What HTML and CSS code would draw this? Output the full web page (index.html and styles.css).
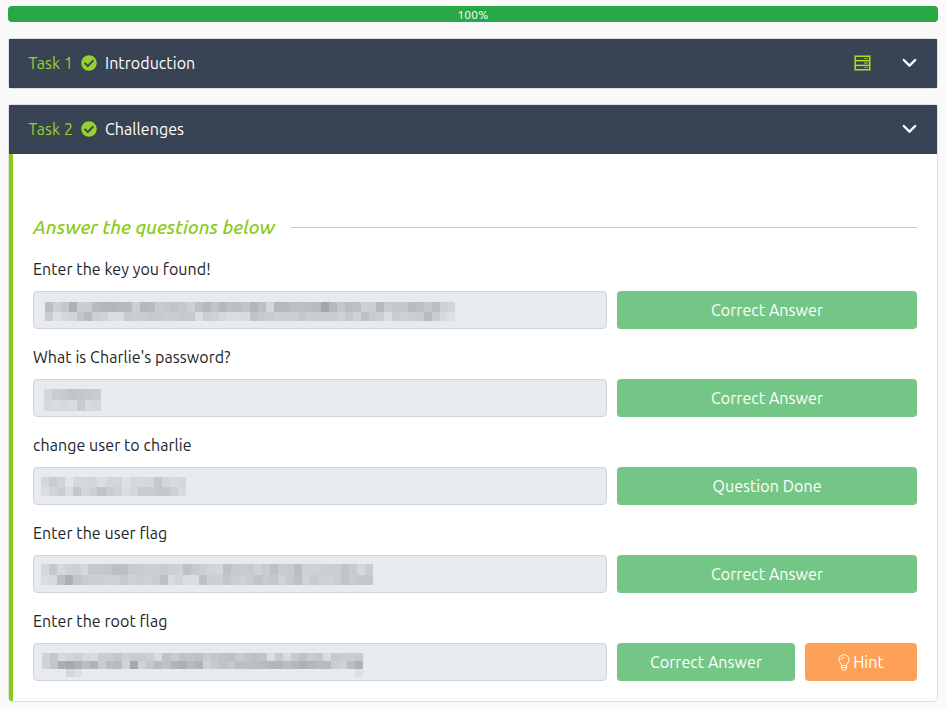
FILE: index.html
```html
<!DOCTYPE html>
<html lang="en">
<head>
<meta charset="utf-8">
<title>Tasks</title>
<link rel="stylesheet" href="styles.css">
</head>
<body>
<svg class="defs" width="0" height="0">
  <symbol id="check" viewBox="0 0 512 512"><path d="M504 256c0 136.967-111.033 248-248 248S8 392.967 8 256 119.033 8 256 8s248 111.033 248 248zM227.314 387.314l184-184c6.248-6.248 6.248-16.379 0-22.627l-22.627-22.627c-6.248-6.249-16.379-6.249-22.628 0L216 308.118l-70.059-70.059c-6.248-6.248-16.379-6.248-22.628 0l-22.627 22.627c-6.248 6.248-6.248 16.379 0 22.627l104 104c6.249 6.249 16.379 6.249 22.628.001z"/></symbol>
  <symbol id="chevron" viewBox="0 0 14 10"><path d="M1.3 2 7 7.7 12.7 2" fill="none" stroke="#fff" stroke-width="2.4" stroke-linecap="round" stroke-linejoin="round"/></symbol>
</svg>
<div class="progress">100%</div>

<section class="card">
  <header class="head">
    <span class="num">Task 1</span><svg class="check"><use href="#check"/></svg><span class="title">Introduction</span>
    <svg class="server" viewBox="0 0 17 16"><path d="M1 1h15v4.7H1zM1 5.7h15v4.6H1zM1 10.3h15V15H1z" fill="none" stroke="#6d9530" stroke-width="2"/><path d="M1.5 1.5h14v4h-14zM1.5 10.5h14v4h-14zM1.5 5.5v5M15.500 5.500v5" fill="none" stroke="#a8e01c"/><path d="M10 3.500h4M10 12.500h4M10 8h4" stroke="#7ba52c"/><path d="M10 7h4v2h-4z" fill="#6d9530"/></svg>
    <svg class="chevron"><use href="#chevron"/></svg>
  </header>
</section>

<section class="card open">
  <header class="head">
    <span class="num">Task 2</span><svg class="check"><use href="#check"/></svg><span class="title">Challenges</span>
    <svg class="chevron"><use href="#chevron"/></svg>
  </header>
  <div class="body">
    <h2 class="divider"><span>Answer the questions below</span></h2>
    <div class="question">
      <p class="label">Enter the key you found!</p>
      <div class="row"><div class="input"><div class="mosaic m1"></div></div><div class="btn"><span>Correct Answer</span></div></div>
    </div>
    <div class="question">
      <p class="label">What is Charlie's password?</p>
      <div class="row"><div class="input"><div class="mosaic m2"></div></div><div class="btn"><span>Correct Answer</span></div></div>
    </div>
    <div class="question">
      <p class="label">change user to charlie</p>
      <div class="row"><div class="input"><div class="mosaic m3"></div></div><div class="btn"><span>Question Done</span></div></div>
    </div>
    <div class="question">
      <p class="label">Enter the user flag</p>
      <div class="row"><div class="input"><div class="mosaic m4"></div></div><div class="btn"><span>Correct Answer</span></div></div>
    </div>
    <div class="question">
      <p class="label">Enter the root flag</p>
      <div class="row"><div class="input"><div class="mosaic m5"></div></div><div class="btn short"><span>Correct Answer</span></div><div class="btn hint"><svg class="bulb" viewBox="0 0 12 17"><path d="M3.500 11.500C3.500 9.500 1 8.500 1 5.700a5 5 0 0 1 10 0c0 2.800-2.500 3.800-2.500 5.800zM3.500 11.500v3l1 1.500h3l1-1.500v-3M3.500 13.500h5M3.500 5.700A2.500 2.500 0 0 1 6 3.200" fill="none" stroke="#fff" stroke-width="1"/></svg><span>Hint</span></div></div>
    </div>
  </div>
</section>
<script src="mosaic.js"></script>
</body>
</html>
```
FILE: styles.css
```css
* { box-sizing: border-box; }
body { margin: 0; padding: 6px 9px 0 8px; background: #fafafa; color: #212529; font: 16px/24px Ubuntu, "Noto Sans", sans-serif; letter-spacing: 0.06px; }
.defs { position: absolute; }
.progress { height: 16px; border-radius: 4px; background: #28a745; color: #fff; font-size: 12px; line-height: 17px; text-align: center; letter-spacing: 0.2px; }
.card { margin-top: 16px; background: #fff; border: 1px solid #dfdfdf; border-radius: 4px; }
.card + .card { margin-top: 15px; }
.head { height: 49px; display: flex; align-items: center; padding: 0 20px 2px 19.5px; background: #384354; color: #fff; }
.num { width: 44.5px; color: #98d02c; white-space: nowrap; }
.check { width: 16px; height: 16px; margin: 0 8px; fill: #98d02c; }
.title { margin-right: auto; }
.server { width: 17px; height: 16px; margin-right: 31px; }
.chevron { width: 15px; height: 10px; }
.body { height: 547px; padding: 61px 20px 20px; border-left: 4px solid #88cc14; border-bottom-left-radius: 3px; }
.divider { display: flex; align-items: center; gap: 16px; margin: 0 0 17px; color: #88cc14; font-size: 19.2px; font-style: italic; font-weight: 500; line-height: 25px; white-space: nowrap; letter-spacing: 0; }
.divider span { width: 242px; }
.divider::after { content: ""; flex: 1; height: 1px; background: #c8c8c8; }
.question { height: 88px; }
.label { margin: 0 0 10px; }
.row { display: flex; gap: 10px; }
.input { width: 574px; height: 38px; border: 1px solid #ced4da; border-radius: 4px; background: #e8ebee; }
.btn { width: 300px; height: 38px; display: flex; align-items: center; justify-content: center; border-radius: 4px; background: #74c686; color: #fff; }
.short { width: 178px; }
.hint { width: 112px; gap: 3px; background: #fea055; }
.bulb { width: 12px; height: 17px; }
.mosaic { display: flex; flex-direction: column; }
.strip { display: flex; }
.strip i { flex: 1; }
.m1 { width: 410px; margin: 10px 0 0 11px; }
.m2 { width: 57px; margin: 9px 0 0 10px; }
.m3 { width: 145px; margin: 9px 0 0 7px; }
.m4 { width: 332px; margin: 8px 0 0 7px; }
.m5 { width: 321px; margin: 9px 0 0 8px; }
```
FILE: mosaic.js
```js
// Each strip: [height in px, one hex brightness per cell; "--" leaves the cell clear]
const masks = {
  m1: [
    [10, "bb cd c5 ae ca ca b9 b4 b4 b7 b7 cd b6 b9 ca c6 c1 c6 cd bf b7 c1 b4 bd bb c2 b4 be d5 b5 b7 bc be bb b9 a4 b7 c5 ba be cd cd b7 c9 c5 c5 ba be c6 bc ce d2"],
    [9, "ca df d6 d2 c3 b9 cd d0 db db c8 ca cb c6 c7 cb cb c7 c6 db cc cf d6 da da d9 c1 c8 ca ce cd cd c5 cb c9 c9 c9 cf c6 cf bd c9 cd da ca ce cc c9 b9 ca d8 de"]
  ],
  m2: [
    [11, "d4 cb c7 c2 c4 c6 c9"],
    [11, "d6 d9 d5 d9 ca d8 d5"]
  ],
  m3: [
    [10, "d6 ca d2 e2 d5 d5 d3 db d4 d4 df d6 d7 d5 c5 d4 d9 d4"],
    [9, "dc d3 cc db c4 d4 ce c1 cb cf da d5 ca c9 c6 c6 cf d9"]
  ],
  m4: [
    [11, "d6 c6 d6 d0 cd d5 c6 c6 c5 bd be c8 ca cd cc c9 cc d0 bf c7 cc d2 d5 bf c8 ca c8 d0 c9 be ca c9 bc cf d0 cd cb cb c1 c9 d6 cb"],
    [10, "db d8 be ad c2 c9 cd cd cf ce c7 cf cd cf ca be d8 d2 db db be cd cd c5 cb cf ca c2 c8 c5 d0 c7 bf d0 c8 cd cf cb c1 ca c6 c5"]
  ],
  m5: [
    [8, "d1 c5 d8 d3 ce d6 da ca cb c5 ce ca ca ce da c1 ca c0 c2 be ca c5 c0 bd c9 c3 be c2 db c8 d8 c7 be ca c5 da c7 ca cc c8"],
    [8, "d0 c3 ac a7 af bc b1 ca ba b9 d0 a6 d0 c5 b9 bf b2 ae b8 b1 d0 c7 c0 c7 bc be bc b9 b5 b2 bb b5 af b4 b8 b8 cb cf bb b0"],
    [8, "-- -- -- d4 dd -- -- -- -- -- -- -- -- -- -- -- -- -- -- -- -- -- -- -- -- -- -- -- -- -- -- -- -- -- -- -- -- -- -- dd"]
  ]
};

for (const [name, strips] of Object.entries(masks)) {
  const box = document.querySelector("." + name);
  for (const [height, cells] of strips) {
    const strip = document.createElement("div");
    strip.className = "strip";
    strip.style.height = height + "px";
    for (const cell of cells.split(" ")) {
      const i = document.createElement("i");
      if (cell !== "--") {
        const v = parseInt(cell, 16);
        i.style.background = `rgb(${v}, ${v + 3}, ${v + 5})`;
      }
      strip.append(i);
    }
    box.append(strip);
  }
}
```
